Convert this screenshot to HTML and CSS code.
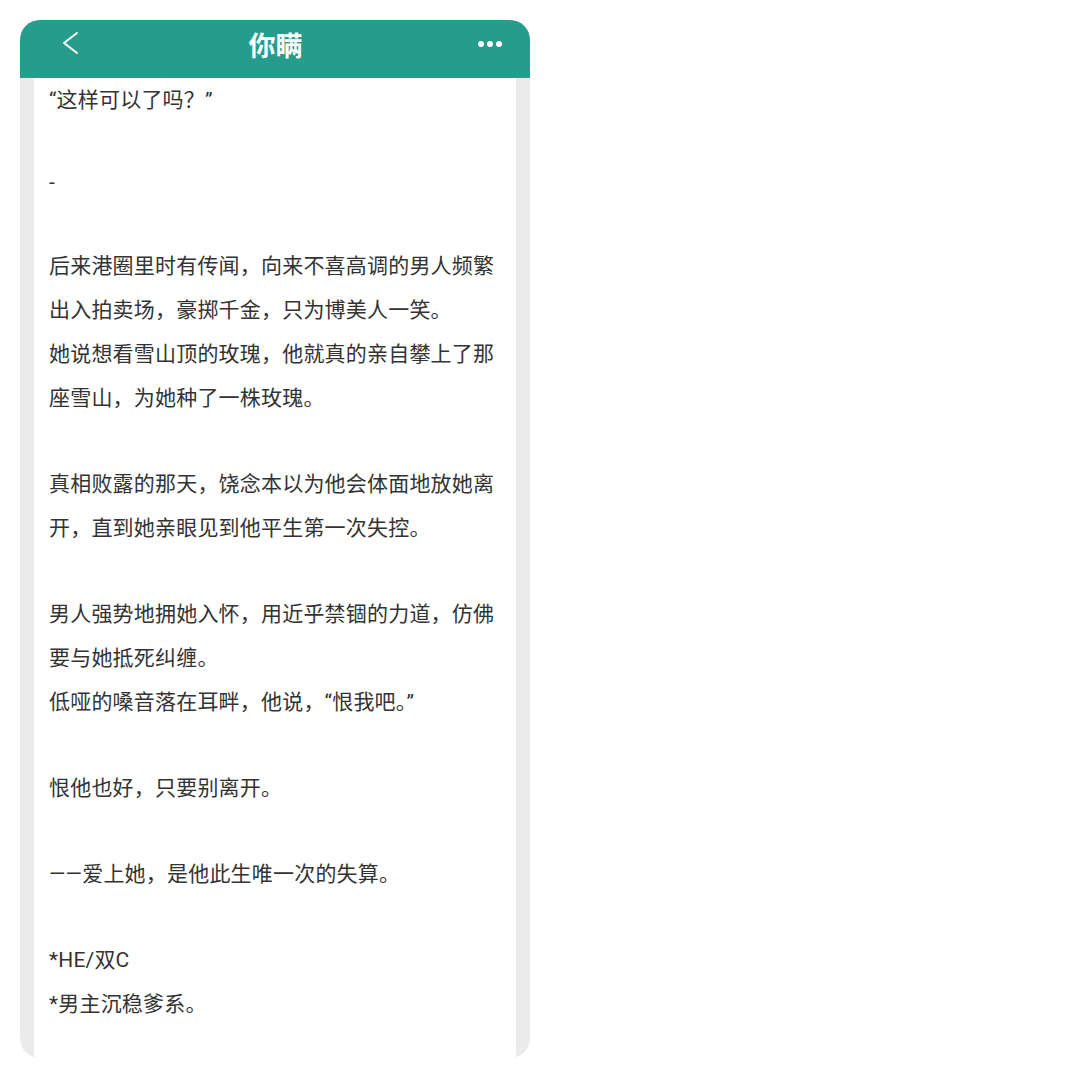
FILE: index.html
```html
<!DOCTYPE html>
<html lang="zh-CN">
<head>
    <meta charset="UTF-8">
    <meta name="viewport" content="width=device-width, initial-scale=1.0">
    <title>你瞒</title>
    <link rel="stylesheet" href="styles.css">
</head>
<body>
    <div class="phone">
        <header class="bar">
            <span class="back">
                <svg width="18" height="24" viewBox="0 0 18 24"><path d="M16 2 L3 12 L16 22" fill="none" stroke="#fff" stroke-width="2" stroke-linecap="round" stroke-linejoin="round"/></svg>
            </span>
            <h1 class="title">你瞒</h1>
            <span class="more">
                <i></i><i></i><i></i>
            </span>
        </header>

        <!-- 正文 -->
        <div class="page">
            <p>“这样可以了吗？”</p>
            <p class="gap_s">-</p>
            <p class="gap_m">后来港圈里时有传闻，向来不喜高调的男人频繁出入拍卖场，豪掷千金，只为博美人一笑。</p>
            <p>她说想看雪山顶的玫瑰，他就真的亲自攀上了那座雪山，为她种了一株玫瑰。</p>
            <p class="gap">真相败露的那天，饶念本以为他会体面地放她离开，直到她亲眼见到他平生第一次失控。</p>
            <p class="gap">男人强势地拥她入怀，用近乎禁锢的力道，仿佛要与她抵死纠缠。</p>
            <p>低哑的嗓音落在耳畔，他说，“恨我吧。”</p>
            <p class="gap">恨他也好，只要别离开。</p>
            <p class="gap">——爱上她，是他此生唯一次的失算。</p>
            <p class="gap">*HE/双C</p>
            <p>*男主沉稳爹系。</p>
        </div>
    </div>
</body>
</html>
```

FILE: styles.css
```css
*{margin: 0;padding: 0;box-sizing: border-box;}
body{background: #fff;font-family: Roboto, "Noto Sans CJK SC", sans-serif;}

.phone{
    width: 510px;
    height: 1038px;
    margin: 20px 0 0 20px;
    border-radius: 20px;
    overflow: hidden;
    background: #ebebeb;
    display: flex;
    flex-direction: column;
}

/* 顶部标题栏 */
.bar{
    height: 58px;
    background: #269d8c;
    display: grid;
    grid-template-columns: 1fr auto 1fr;
    align-items: center;
    padding: 0 28px 0 41px;
    color: #fff;
}
.back{display: flex;margin-top: -12px;}
.title{font-size: 27px;font-weight: bold;margin-right: 12px;margin-top: -9px;}
.more{display: flex;gap: 3px;justify-content: flex-end;margin-top: -10px;}
.more i{width: 6px;height: 6px;border-radius: 50%;background: #fff;}

.page{
    flex: 1;
    margin: 0 14px;
    background: #fff;
    padding: 0 16px 0 15px;
    color: #333;
    font-size: 21px;
    letter-spacing: 0.2px;
    line-height: 44px;
}
.page .gap_s{margin-top: 38px;}
.page .gap_m{margin-top: 40px;}
.page .gap{margin-top: 42px;}
```
